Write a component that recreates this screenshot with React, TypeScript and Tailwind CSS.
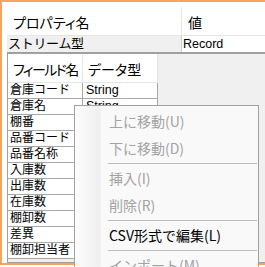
const font = "font-['Liberation_Sans','Noto_Sans_CJK_JP',sans-serif]"

const fields = ['倉庫コード', '倉庫名', '棚番', '品番コード', '品番名称', '入庫数', '出庫数', '在庫数', '棚卸数', '差異', '棚卸担当者']

type MenuEntry = { label: string; disabled?: boolean } | 'sep'

const menu: MenuEntry[] = [
  { label: '上に移動(U)', disabled: true },
  { label: '下に移動(D)', disabled: true },
  'sep',
  { label: '挿入(I)', disabled: true },
  { label: '削除(R)', disabled: true },
  'sep',
  { label: 'CSV形式で編集(L)' },
  'sep',
  { label: 'インポート(M)', disabled: true },
]

const App = () => {
  return (
    <div className={`relative w-[265px] h-[267px] overflow-hidden bg-white text-black ${font}`}>
      <div className="w-[320px] h-[265px] border-l-2 border-t-2 border-b-2 border-[#f6a55e] pl-[5px] pt-[5px] flex flex-col">
        {/* property grid header */}
        <div className="flex h-[29px] border-b border-[#e6e6e6] bg-white text-[14px] whitespace-nowrap [font-feature-settings:'palt']">
          <div className="w-[175px] border-r border-[#e6e6e6] pl-[6px] pt-[6px]">プロパティ名</div>
          <div className="flex-1 pl-[6px] pt-[6px]">値</div>
        </div>

        {/* stream row */}
        <div className="flex h-[16px] text-[13px] leading-[16px] whitespace-nowrap">
          <div className="w-[175px] bg-[#f0f0f0] border-r border-[#d0d0d0] pl-[1px] tracking-[-0.3px]">ストリーム型</div>
          <div className="flex-1 bg-white pl-[1px] text-[12.5px]">Record</div>
        </div>

        {/* nested field grid */}
        <div className="flex-1 bg-[#f0f0f0] border-t-2 border-l border-b border-[#a0a0a0]">
          <div className="w-[150px] bg-white">
            <div className="flex h-[29px] border-b border-[#e6e6e6] text-[14px] whitespace-nowrap [font-feature-settings:'palt']">
              <div className="w-[75px] border-r border-[#e6e6e6] pl-[5px] pt-[6px] overflow-hidden tracking-[-1.6px]">フィールド名</div>
              <div className="w-[75px] border-r border-[#e6e6e6] pl-[5px] pt-[6px] overflow-hidden">データ型</div>
            </div>
            {fields.map((f) => (
              <div key={f} className="flex h-[16px] border-b border-[#a8a8a8] text-[12px] leading-[15px] whitespace-nowrap">
                <div className="w-[75px] border-r border-[#a8a8a8] pl-[2px] overflow-hidden">{f}</div>
                <div className="w-[75px] border-r border-[#a8a8a8] pl-[3px] text-[12.5px]">String</div>
              </div>
            ))}
          </div>
        </div>
      </div>

      {/* context menu */}
      <div className="absolute left-[74px] top-[105px] w-[185px] h-[200px] border border-[#a0a0a0] bg-[linear-gradient(to_right,#fdfdfd_0px,#efefef_25px,#f9f9f9_26px)] pt-[2px] text-[14px] font-['Noto_Sans_CJK_JP',sans-serif]">
        {menu.map((m, i) =>
          m === 'sep' ? (
            <div key={i} className="h-[3px] pl-[33px] pr-px flex items-center">
              <div className="h-px w-full bg-[#bdbdbd]" />
            </div>
          ) : (
            <div
              key={i}
              className={`h-[27px] pl-[34px] flex items-center whitespace-nowrap ${m.disabled ? 'text-[#a3a3a3]' : 'text-black'}`}
            >
              {m.label}
            </div>
          )
        )}
      </div>
    </div>
  )
}

export default App
